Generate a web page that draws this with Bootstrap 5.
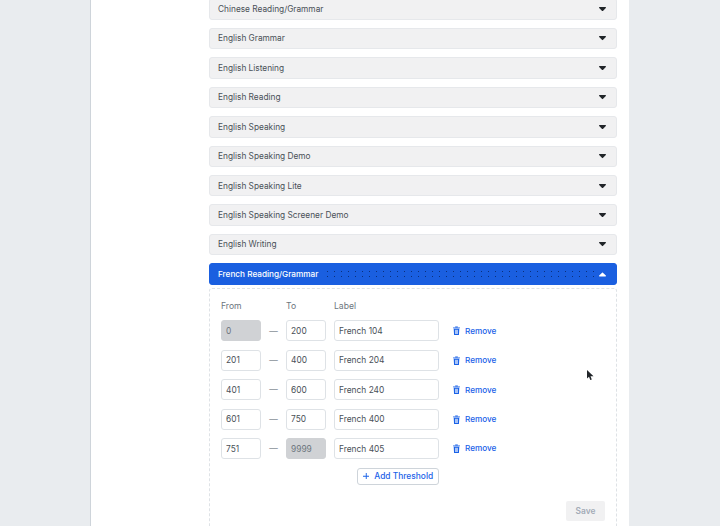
<!DOCTYPE html>
<html>
<head>
  <title>Placement Thresholds</title>
  <link href="https://cdn.jsdelivr.net/npm/bootstrap@5.3.0/dist/css/bootstrap.min.css" rel="stylesheet">
  <style>
    html, body { height: 526px; overflow: hidden; }
    body { background: #e9ecef; font-family: Inter, "Liberation Sans", sans-serif; font-size: 8.4px; color: #495057; }
    .sheet { display: flow-root; width: 539px; height: 526px; margin-left: 90px; background: #fff; border-left: 1px solid #ced4da; padding: 0 12px 0 118px; }
    .test-list { margin-top: -1.6px; }
    .test-row { height: 21.45px; margin-bottom: 8px; padding: 0 10px 0 8px; background: #f1f1f2; border: 1px solid #e6e8eb; border-radius: 3px; color: #495057; font-size: 8.3px; line-height: 1; }
    .test-row.is-open { background: #1a5fe0; border-color: #1a5fe0; color: #fff; font-size: 8.2px; font-weight: 500; }
    .dither { height: 10px; margin: 0 0 0 6px; background-image: radial-gradient(circle, #0b2f7a 0.5px, transparent 0.8px); background-size: 7px 5px; }
    .test-panel { height: 240px; margin-top: -4.4px; padding: 10px 11px 0; border: 1px dashed #dee2e6; border-bottom: 0; border-radius: 3px 3px 0 0; }
    .col-from { width: 40px; }
    .col-dash { width: 25px; text-align: center; color: #868e96; font-size: 8.5px; }
    .col-label { width: 105px; margin-left: 8px; }
    .head-row { height: 14px; margin-bottom: 7px; color: #6c757d; font-size: 8.6px; }
    .band-row { height: 21px; margin-bottom: 8.45px; }
    .band-input { height: 21px; padding: 0 4px; border: 1px solid #dee2e6; border-radius: 3px; font-size: 8.4px; color: #495057; background: #fff; min-height: 0; }
    .band-input:disabled { background: #d0d2d5; border-color: #d0d2d5; color: #6c757d; }
    .remove-link { margin-left: 14px; color: #1a62e8; font-size: 8.2px; font-weight: 500; text-decoration: none; }
    .add-btn { width: 82px; height: 17px; margin-left: 136px; padding: 0; border: 1px solid #ced4da; border-radius: 3px; color: #1a62e8; background: #fff; font-size: 8.4px; font-weight: 500; line-height: 1; }
    .save-btn { width: 39px; height: 20px; margin: 16.5px 0 0 auto; padding: 0; border: 0; border-radius: 2px; background: #f1f1f2; color: #a3abb7; font-size: 8.4px; font-weight: 600; line-height: 1; }
    .save-btn:disabled { background: #f1f1f2; color: #a3abb7; opacity: 1; border: 0; }
    .gap-5px { gap: 5px; }
    .pointer { position: absolute; left: 587px; top: 370px; }
  </style>
</head>
<body>
  <div class="sheet">
    <div class="test-list">
      <div class="test-row d-flex align-items-center justify-content-between">Chinese Reading/Grammar <svg width="7" height="4.500" viewBox="0 0 8 5"><path d="M.6 0h6.8c.5 0 .8.6.4 1L4.4 4.600c-.2.2-.6.2-.8 0L.2 1C-.2.6.1 0 .6 0z" fill="#212529"/></svg></div>
      <div class="test-row d-flex align-items-center justify-content-between">English Grammar <svg width="7" height="4.500" viewBox="0 0 8 5"><path d="M.6 0h6.8c.5 0 .8.6.4 1L4.4 4.600c-.2.2-.6.2-.8 0L.2 1C-.2.6.1 0 .6 0z" fill="#212529"/></svg></div>
      <div class="test-row d-flex align-items-center justify-content-between">English Listening <svg width="7" height="4.500" viewBox="0 0 8 5"><path d="M.6 0h6.8c.5 0 .8.6.4 1L4.4 4.600c-.2.2-.6.2-.8 0L.2 1C-.2.6.1 0 .6 0z" fill="#212529"/></svg></div>
      <div class="test-row d-flex align-items-center justify-content-between">English Reading <svg width="7" height="4.500" viewBox="0 0 8 5"><path d="M.6 0h6.8c.5 0 .8.6.4 1L4.4 4.600c-.2.2-.6.2-.8 0L.2 1C-.2.6.1 0 .6 0z" fill="#212529"/></svg></div>
      <div class="test-row d-flex align-items-center justify-content-between">English Speaking <svg width="7" height="4.500" viewBox="0 0 8 5"><path d="M.6 0h6.8c.5 0 .8.6.4 1L4.4 4.600c-.2.2-.6.2-.8 0L.2 1C-.2.6.1 0 .6 0z" fill="#212529"/></svg></div>
      <div class="test-row d-flex align-items-center justify-content-between">English Speaking Demo <svg width="7" height="4.500" viewBox="0 0 8 5"><path d="M.6 0h6.8c.5 0 .8.6.4 1L4.4 4.600c-.2.2-.6.2-.8 0L.2 1C-.2.6.1 0 .6 0z" fill="#212529"/></svg></div>
      <div class="test-row d-flex align-items-center justify-content-between">English Speaking Lite <svg width="7" height="4.500" viewBox="0 0 8 5"><path d="M.6 0h6.8c.5 0 .8.6.4 1L4.4 4.600c-.2.2-.6.2-.8 0L.2 1C-.2.6.1 0 .6 0z" fill="#212529"/></svg></div>
      <div class="test-row d-flex align-items-center justify-content-between">English Speaking Screener Demo <svg width="7" height="4.500" viewBox="0 0 8 5"><path d="M.6 0h6.8c.5 0 .8.6.4 1L4.4 4.600c-.2.2-.6.2-.8 0L.2 1C-.2.6.1 0 .6 0z" fill="#212529"/></svg></div>
      <div class="test-row d-flex align-items-center justify-content-between">English Writing <svg width="7" height="4.500" viewBox="0 0 8 5"><path d="M.6 0h6.8c.5 0 .8.6.4 1L4.4 4.600c-.2.2-.6.2-.8 0L.2 1C-.2.6.1 0 .6 0z" fill="#212529"/></svg></div>
      <div class="test-row is-open d-flex align-items-center">French Reading/Grammar <span class="dither flex-fill"></span><svg width="7" height="5" viewBox="0 0 9 5"><path d="M.7 5h7.6c.6 0 .9-.7.5-1.100L5 .3c-.3-.3-.7-.3-1 0L.2 3.900C-.2 4.300.1 5 .7 5z" fill="#fff"/></svg></div>
    </div>
    <div class="test-panel">
      <div class="head-row d-flex align-items-center">
        <div class="col-from">From</div><div class="col-dash"></div><div class="col-from">To</div><div class="col-label">Label</div>
      </div>
      <div class="band-row d-flex align-items-center">
        <input class="form-control band-input col-from" value="0" disabled><div class="col-dash">—</div><input class="form-control band-input col-from" value="200"><input class="form-control band-input col-label" value="French 104">
        <a class="remove-link d-flex align-items-center gap-5px" href="#"><svg width="7" height="9" viewBox="0 0 8 10"><path d="M0 1.500h8v1H0zM2.500.3h3v1h-3zM.8 3h6.400l-.4 7H1.200zM2.300 4v5h.7V4zM3.650 4v5h.7V4zM5 4v5h.7V4z" fill="#1a62e8" fill-rule="evenodd"/></svg>Remove</a>
      </div>
      <div class="band-row d-flex align-items-center">
        <input class="form-control band-input col-from" value="201"><div class="col-dash">—</div><input class="form-control band-input col-from" value="400"><input class="form-control band-input col-label" value="French 204">
        <a class="remove-link d-flex align-items-center gap-5px" href="#"><svg width="7" height="9" viewBox="0 0 8 10"><path d="M0 1.500h8v1H0zM2.500.3h3v1h-3zM.8 3h6.400l-.4 7H1.200zM2.300 4v5h.7V4zM3.650 4v5h.7V4zM5 4v5h.7V4z" fill="#1a62e8" fill-rule="evenodd"/></svg>Remove</a>
      </div>
      <div class="band-row d-flex align-items-center">
        <input class="form-control band-input col-from" value="401"><div class="col-dash">—</div><input class="form-control band-input col-from" value="600"><input class="form-control band-input col-label" value="French 240">
        <a class="remove-link d-flex align-items-center gap-5px" href="#"><svg width="7" height="9" viewBox="0 0 8 10"><path d="M0 1.500h8v1H0zM2.500.3h3v1h-3zM.8 3h6.400l-.4 7H1.200zM2.300 4v5h.7V4zM3.650 4v5h.7V4zM5 4v5h.7V4z" fill="#1a62e8" fill-rule="evenodd"/></svg>Remove</a>
      </div>
      <div class="band-row d-flex align-items-center">
        <input class="form-control band-input col-from" value="601"><div class="col-dash">—</div><input class="form-control band-input col-from" value="750"><input class="form-control band-input col-label" value="French 400">
        <a class="remove-link d-flex align-items-center gap-5px" href="#"><svg width="7" height="9" viewBox="0 0 8 10"><path d="M0 1.500h8v1H0zM2.500.3h3v1h-3zM.8 3h6.400l-.4 7H1.200zM2.300 4v5h.7V4zM3.650 4v5h.7V4zM5 4v5h.7V4z" fill="#1a62e8" fill-rule="evenodd"/></svg>Remove</a>
      </div>
      <div class="band-row d-flex align-items-center">
        <input class="form-control band-input col-from" value="751"><div class="col-dash">—</div><input class="form-control band-input col-from" value="9999" disabled><input class="form-control band-input col-label" value="French 405">
        <a class="remove-link d-flex align-items-center gap-5px" href="#"><svg width="7" height="9" viewBox="0 0 8 10"><path d="M0 1.500h8v1H0zM2.500.3h3v1h-3zM.8 3h6.400l-.4 7H1.200zM2.300 4v5h.7V4zM3.650 4v5h.7V4zM5 4v5h.7V4z" fill="#1a62e8" fill-rule="evenodd"/></svg>Remove</a>
      </div>
      <button class="btn add-btn d-flex align-items-center justify-content-center gap-5px" type="button"><svg width="6.500" height="6.500" viewBox="0 0 7 7"><path d="M3 0h1v3h3v1H4v3H3V4H0V3h3z" fill="#1a62e8"/></svg>Add Threshold</button>
      <button class="btn save-btn d-block" type="button" disabled>Save</button>
    </div>
  </div>
  <svg class="pointer" width="7" height="11" viewBox="0 0 7 11"><path d="M0 0v8.500l2-1.800 1.300 3.300 1.500-.6-1.300-3.200H6.500z" fill="#212529"/></svg>
</body>
</html>
